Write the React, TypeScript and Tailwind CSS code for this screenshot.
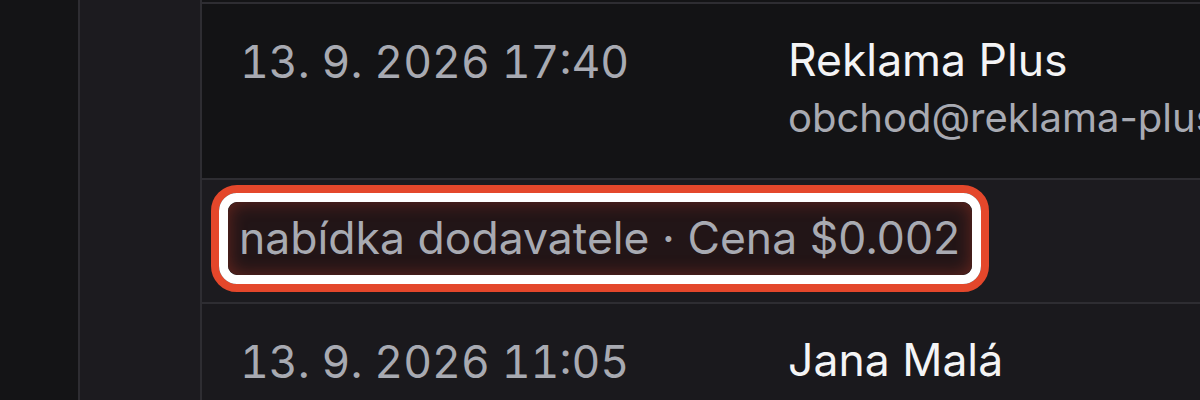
export default function App() {
  return (
    <div className="flex h-[400px] w-[1200px] overflow-hidden bg-[#141416] font-['Inter',sans-serif]">
      <div className="w-[80px] shrink-0 border-r-2 border-[#2e2d32] bg-[#141416]" />
      <div className="w-[122px] shrink-0 border-r-2 border-[#2e2d32] bg-[#1c1b1f]" />
      <div className="min-w-0 flex-1 pt-[2px]">
        <div className="border-t-2 border-[#2e2d32]">
          {/* row 1 */}
          <div className="flex h-[176px] border-b-2 border-[#2e2d32] bg-[#131315]">
            <div className="w-[586px] shrink-0 pl-[38px] pt-[26px] text-[44.5px] leading-[64px] tabular-nums text-[#a8aab2]">
              13. 9. 2026 17:40
            </div>
            <div className="min-w-0 overflow-hidden whitespace-nowrap pt-[24px]">
              <div className="text-[44.5px] leading-[64px] text-[#f4f4f5]">Reklama Plus</div>
              <div className="text-[40px] leading-[52px] text-[#a8aab2]">obchod@reklama-plus.cz</div>
            </div>
          </div>
          {/* note row */}
          <div className="h-[124px] border-b-2 border-[#2e2d32] bg-[#1c1b1f] pl-[9px] pt-[5px]">
            <div className="inline-block rounded-[26px] border-8 border-[#e4472b]">
              <div className="rounded-[18px] border-[9px] border-white">
                <div className="whitespace-nowrap rounded-[10px] bg-[#221517] pl-[11px] pr-[12px] text-[44.5px] leading-[73px] text-[#a8aab2] shadow-[inset_0_0_18px_rgba(190,60,40,0.45)]">
                  nabídka dodavatele · Cena $0.002
                </div>
              </div>
            </div>
          </div>
          {/* row 3 */}
          <div className="flex h-[120px] bg-[#1a191d]">
            <div className="w-[586px] shrink-0 pl-[38px] pt-[26px] text-[44.5px] leading-[64px] tabular-nums text-[#a8aab2]">
              13. 9. 2026 11:05
            </div>
            <div className="whitespace-nowrap pt-[24px] text-[44.5px] leading-[64px] text-[#f4f4f5]">Jana Malá</div>
          </div>
        </div>
      </div>
    </div>
  );
}
